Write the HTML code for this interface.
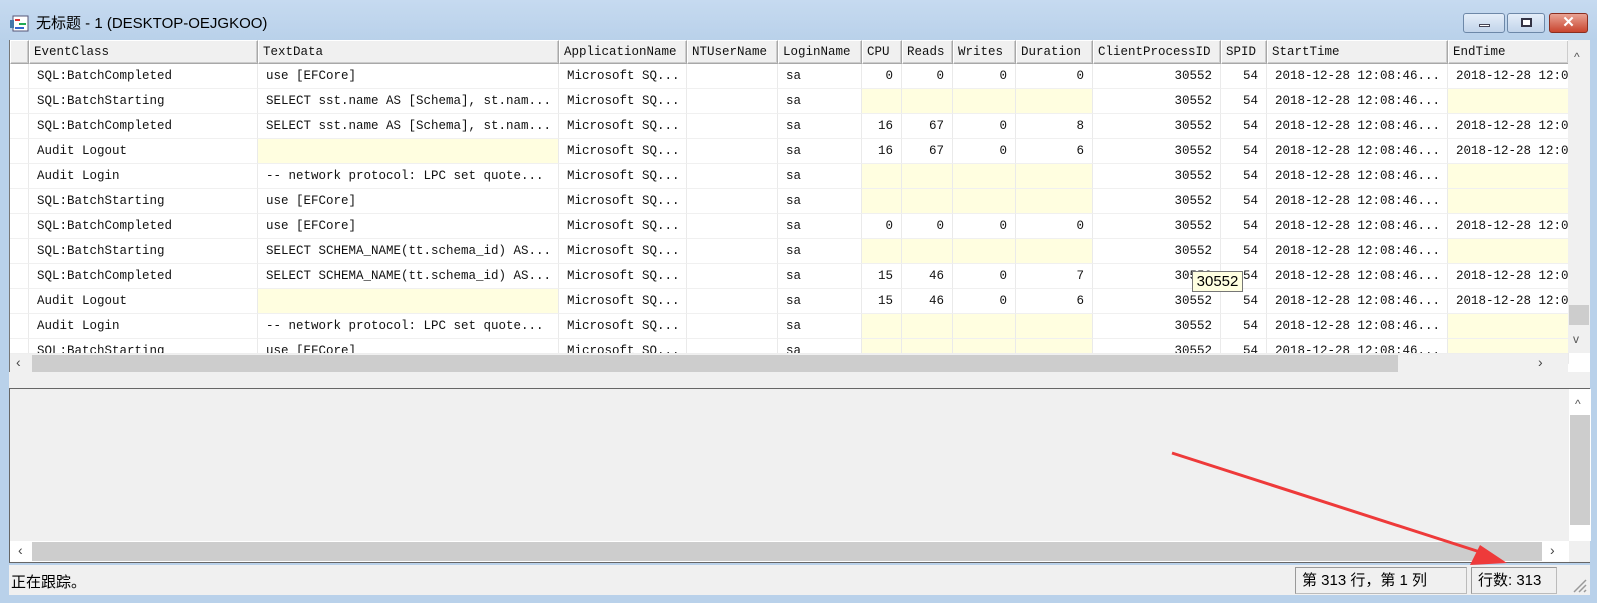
<!DOCTYPE html>
<html><head><meta charset="utf-8"><style>
*{box-sizing:border-box;margin:0;padding:0}
body{width:1597px;height:603px;overflow:hidden;background:#b9d1ea;position:relative;font-family:"Liberation Sans","Noto Sans CJK SC",sans-serif}
.title{position:absolute;left:0;top:0;width:1597px;height:40px;background:linear-gradient(#c6daf0,#b9d1ea)}
.title span{position:absolute;left:36px;top:12px;font-size:15px;color:#000}
.btn{position:absolute;top:13px;height:20px;border:1px solid #6d88a8;border-radius:3px;background:linear-gradient(#e4eef9,#c2d4ea)}
.grid{position:absolute;left:9px;top:40px;width:1581px;height:332px;background:#fff;border-left:1px solid #777;overflow:hidden}
.c{position:absolute;height:25px;border-right:1px solid #eaeaea;border-bottom:1px solid #f0f0f0;font-family:"Liberation Mono",monospace;font-size:12.5px;line-height:25px;padding:0 8px;white-space:nowrap;overflow:hidden;color:#111}
.h{height:24px;line-height:22px;background:#f0f0f0;border:1px solid #a8a8a8;border-top-color:#fff;border-left-color:#fff;padding:0 4px;box-shadow:inset -1px -1px 0 #ccc}
.r{text-align:right}
.y{background:#fffee0}
.sb{position:absolute;background:#f0f0f0}
.lower{position:absolute;left:9px;top:388px;width:1581px;height:175px;background:#f0f0f0;border:1px solid #666;border-right:none}
.status{position:absolute;left:9px;top:565px;width:1581px;height:30px;background:#f0f0f0}
.pn{position:absolute;top:2px;height:27px;border:1px solid #bbb;border-top-color:#999;border-left-color:#999;font-size:15px;line-height:25px;padding-left:6px}
</style></head><body>
<div class="title">
<svg style="position:absolute;left:10px;top:14px" width="20" height="18"><rect x="3" y="2" width="15" height="15" fill="#fff" stroke="#557"/><rect x="5" y="5" width="5" height="2" fill="#d33"/><rect x="9" y="9" width="7" height="2" fill="#2a5"/><rect x="5" y="13" width="9" height="2" fill="#36c"/><rect x="0" y="6" width="4" height="8" fill="#47a"/></svg>
<span>无标题 - 1 (DESKTOP-OEJGKOO)</span>
<div class="btn" style="left:1463px;width:42px"><div style="position:absolute;left:15px;top:10px;width:11px;height:3px;background:#fff;border:1px solid #445"></div></div>
<div class="btn" style="left:1507px;width:38px"><div style="position:absolute;left:13px;top:4px;width:11px;height:9px;border:2px solid #334;background:#fff"></div></div>
<div class="btn" style="left:1549px;width:39px;background:linear-gradient(#e9a394,#c9452f);border-color:#8a2e20;color:#fff;text-align:center;font-weight:bold;font-size:15px;line-height:18px">✕</div>
</div>
<div class="grid" id="g"></div>
<div class="sb" style="left:1568px;top:40px;width:22px;height:313px"><div style="position:absolute;top:10px;left:6px;font-size:12px;color:#555">^</div><div style="position:absolute;top:265px;left:1px;width:20px;height:20px;background:#cdcdcd"></div><div style="position:absolute;top:292px;left:5px;font-size:12px;color:#555">v</div></div>
<div class="sb" style="left:10px;top:353px;width:1558px;height:19px;border-top:1px solid #eee"><div style="position:absolute;left:6px;top:0;font-size:14px;color:#444">‹</div><div style="position:absolute;left:22px;top:1px;width:1366px;height:17px;background:#cdcdcd"></div><div style="position:absolute;left:1528px;top:0;font-size:14px;color:#444">›</div></div>
<div class="sb" style="left:9px;top:372px;width:1581px;height:16px"></div>
<div class="lower">
<div class="sb" style="left:1559px;top:0;width:22px;height:152px;background:#fff"><div style="position:absolute;top:8px;left:6px;font-size:12px;color:#555">^</div><div style="position:absolute;top:26px;left:1px;width:20px;height:110px;background:#cdcdcd"></div></div>
<div class="sb" style="left:0;top:152px;width:1559px;height:21px;background:#fff"><div style="position:absolute;left:8px;top:1px;font-size:14px;color:#444">‹</div><div style="position:absolute;left:22px;top:1px;width:1510px;height:19px;background:#cdcdcd"></div><div style="position:absolute;left:1540px;top:1px;font-size:14px;color:#444">›</div></div>
</div>
<div class="status">
<div style="position:absolute;left:2px;top:6px;font-size:15px">正在跟踪。</div>
<div class="pn" style="left:1286px;width:172px">第 313 行，第 1 列</div>
<div class="pn" style="left:1462px;width:86px">行数: 313</div>
<svg style="position:absolute;left:1562px;top:12px" width="16" height="16"><path d="M15 3L3 15M15 8L8 15M15 13L13 15" stroke="#999" stroke-width="1.5"/></svg>
</div>
<svg style="position:absolute;left:0;top:0" width="1597" height="603"><line x1="1172" y1="453" x2="1480" y2="552" stroke="#ee3a3a" stroke-width="3"/><polygon points="1507,563 1470,565 1480,545" fill="#ee3a3a"/></svg>
<div style="position:absolute;left:1192px;top:271px;width:51px;height:21px;background:#ffffe1;border:1px solid #767676;font-size:15px;line-height:19px;text-align:center">30552</div>
<script>
var b=[0,19,248,549,677,768,852,892,943,1006,1083,1211,1257,1438,1559];
var cols=[];for(var k=0;k<14;k++)cols.push([b[k],b[k+1]-b[k]]);
var hd=["","EventClass","TextData","ApplicationName","NTUserName","LoginName","CPU","Reads","Writes","Duration","ClientProcessID","SPID","StartTime","EndTime"];
var S="2018-12-28 12:08:46...",E="2018-12-28 12:0";
var rows=[
["SQL:BatchCompleted","use [EFCore]","0","0","0","0",E],
["SQL:BatchStarting","SELECT sst.name AS [Schema], st.nam...",null,null,null,null,null],
["SQL:BatchCompleted","SELECT sst.name AS [Schema], st.nam...","16","67","0","8",E],
["Audit Logout",null,"16","67","0","6",E],
["Audit Login","-- network protocol: LPC  set quote...",null,null,null,null,null],
["SQL:BatchStarting","use [EFCore]",null,null,null,null,null],
["SQL:BatchCompleted","use [EFCore]","0","0","0","0",E],
["SQL:BatchStarting","SELECT SCHEMA_NAME(tt.schema_id) AS...",null,null,null,null,null],
["SQL:BatchCompleted","SELECT SCHEMA_NAME(tt.schema_id) AS...","15","46","0","7",E],
["Audit Logout",null,"15","46","0","6",E],
["Audit Login","-- network protocol: LPC  set quote...",null,null,null,null,null],
["SQL:BatchStarting","use [EFCore]",null,null,null,null,null]];
var h="";
for(var i=0;i<cols.length;i++)h+='<div class="c h" style="left:'+cols[i][0]+'px;top:0;width:'+cols[i][1]+'px">'+hd[i]+'</div>';
for(var r=0;r<rows.length;r++){var d=rows[r],t=24+r*25;
var v=[["",0],[d[0],0],[d[1],0],["Microsoft SQ...",0],["",0],["sa",0],[d[2],1],[d[3],1],[d[4],1],[d[5],1],["30552",1],["54",1],[S,0],[d[6],0]];
for(var i=0;i<cols.length;i++){var x=v[i][0];var cl="c"+(v[i][1]?" r":"")+(x===null?" y":"");
h+='<div class="'+cl+'" style="left:'+cols[i][0]+'px;top:'+t+'px;width:'+cols[i][1]+'px">'+(x||"")+'</div>';}}
document.getElementById("g").innerHTML=h;
</script>
</body></html>
